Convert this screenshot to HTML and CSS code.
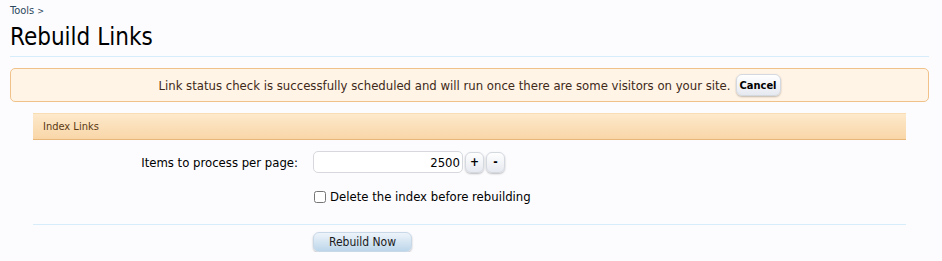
FILE: index.html
```html
<!DOCTYPE html>
<html>
<head>
<meta charset="utf-8">
<link rel="stylesheet" href="styles.css">
</head>
<body>
<div class="page">
  <nav class="crumbs"><a href="#">Tools</a> <span class="gt">&gt;</span></nav>
  <h1 class="title">Rebuild Links</h1>
  <div class="notice">
    <span>Link status check is successfully scheduled and will run once there are some visitors on your site.</span>
    <button class="btn small">Cancel</button>
  </div>
  <div class="section">
    <h3 class="section-head">Index Links</h3>
    <div class="row">
      <label class="row-label">Items to process per page:</label>
      <div class="row-ctrl">
        <input class="num" type="text" value="2500">
        <button class="btn spin">+</button>
        <button class="btn spin">-</button>
      </div>
    </div>
    <div class="row check-row">
      <div class="row-label"></div>
      <label class="row-ctrl check"><input type="checkbox"> Delete the index before rebuilding</label>
    </div>
    <div class="submit">
      <div class="row-label"></div>
      <div class="row-ctrl"><button class="btn primary">Rebuild Now</button></div>
    </div>
  </div>
</div>
</body>
</html>
```
FILE: styles.css
```css
html, body {
  margin: 0;
  background: #fcfcff;
}
body {
  font-family: "DejaVu Sans Condensed", "DejaVu Sans", sans-serif;
  font-size: 11px;
  color: #000;
}
.page {
  padding: 4px 13px 0 10px;
}
.crumbs {
  font-size: 11px;
  line-height: 14px;
  height: 14px;
}
.crumbs a {
  color: #2b485c;
  text-decoration: none;
}
.crumbs .gt {
  color: #2b485c;
  font-size: 9px;
}
.title {
  margin: 5px 0 0;
  font-size: 24px;
  font-weight: normal;
  line-height: 28px;
  padding-bottom: 5px;
  border-bottom: 1px solid #d7edfc;
}
.notice {
  margin-top: 11px;
  height: 32px;
  border: 1px solid #f0c28a;
  border-radius: 5px;
  background: #fff4e5;
  display: flex;
  align-items: center;
  justify-content: center;
  gap: 5px;
  font-size: 13px;
  color: #40291a;
}
.btn {
  font-family: inherit;
  font-weight: bold;
  font-size: 11px;
  color: #000;
  border: 1px solid #d4d8df;
  border-radius: 6px;
  background: linear-gradient(#ffffff, #e6e9f0);
  box-shadow: 0 1px 2px rgba(0,0,0,.25);
  padding: 0;
  cursor: pointer;
}
.btn.small {
  height: 22px;
  width: 45px;
}
.section {
  margin: 11px 23px 0 23px;
}
.section-head {
  margin: 0;
  height: 25px;
  line-height: 25px;
  padding-left: 10px;
  font-size: 11px;
  font-weight: normal;
  color: #5a3a14;
  background: linear-gradient(#fde9cb, #f9d6a8);
  border-top: 1px solid #f8ddb5;
  border-bottom: 1px solid #e8b679;
}
.row {
  display: flex;
  align-items: center;
  margin-top: 11px;
}
.row-label {
  width: 265px;
  flex: none;
  text-align: right;
  font-size: 13px;
  padding-right: 15px;
}
.row-ctrl {
  display: flex;
  align-items: center;
  gap: 2px;
}
.num {
  width: 146px;
  height: 20px;
  box-sizing: content-box;
  border: 1px solid #d6d8dd;
  border-radius: 5px;
  background: #fff;
  text-align: right;
  font-family: inherit;
  font-size: 13px;
  padding: 0 2px 0 0;
  margin: 0;
}
.btn.spin {
  width: 19px;
  height: 21px;
  font-size: 12px;
  margin-left: 0;
}
.check-row {
  margin-top: 16px;
}
.check {
  font-size: 13px;
  gap: 4px;
}
.check input {
  margin: 0 0 0 1px;
  width: 12px;
  height: 12px;
}
.submit {
  display: flex;
  margin-top: 20px;
  border-top: 1px solid #d7edfc;
  padding-top: 7px;
}
.btn.primary {
  width: 99px;
  height: 20px;
  font-weight: normal;
  font-size: 12px;
  color: #1a1a1a;
  border-color: #c8d8e6;
  background: linear-gradient(#eef4fa, #bcd6ea);
}
```
